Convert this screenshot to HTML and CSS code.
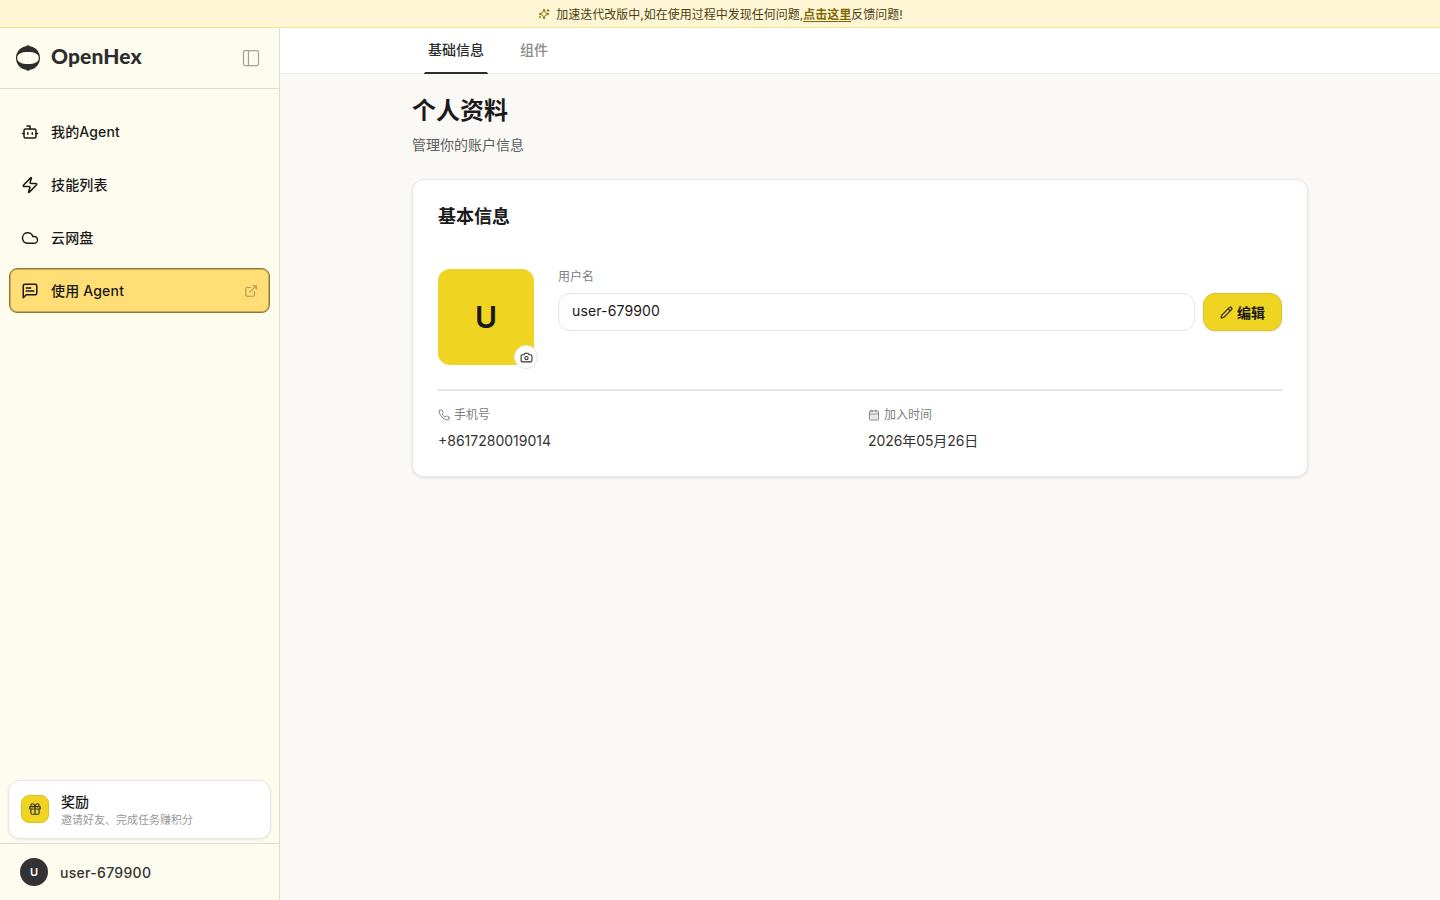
FILE: index.html
```html
<!DOCTYPE html>
<html lang="zh-CN">
<head>
  <meta charset="UTF-8">
  <title>OpenHex</title>
  <link rel="stylesheet" href="styles.css">
</head>
<body>
  <div class="banner">
    <svg class="icon banner-icon" viewBox="0 0 24 24"><path d="M9.937 15.5A2 2 0 0 0 8.5 14.063l-6.135-1.582a.5.5 0 0 1 0-.962L8.5 9.936A2 2 0 0 0 9.937 8.5l1.582-6.135a.5.5 0 0 1 .963 0L14.063 8.5A2 2 0 0 0 15.5 9.937l6.135 1.581a.5.5 0 0 1 0 .964L15.5 14.063a2 2 0 0 0-1.437 1.437l-1.582 6.135a.5.5 0 0 1-.963 0z"/><path d="M20 3v4M22 5h-4M4 17v2M5 18H3"/></svg>
    <span class="banner-text">加速迭代改版中,如在使用过程中发现任何问题,<a href="#">点击这里</a>反馈问题!</span>
  </div>

  <div class="layout">
    <aside class="sidebar">
      <div class="brand">
        <svg class="logo" viewBox="0 0 24 26"><path fill-rule="evenodd" d="M12 0L14 1.2C20 2.2 24 7 24 13S20 23.8 14 24.8L12 26L10 24.8C4 23.8 0 19 0 13S4 2.2 10 1.2ZM12 7C5.5 7 1.2 8.7 1.2 13S5.5 19 12 19S22.8 17.3 22.8 13S18.5 7 12 7Z"/></svg>
        <span class="brand-name">OpenHex</span>
        <svg class="icon toggle" viewBox="0 0 24 24"><rect x="3" y="3" width="18" height="18" rx="2"/><path d="M9 3v18"/></svg>
      </div>

      <nav class="nav">
        <a class="nav-item">
          <svg class="icon" viewBox="0 0 24 24"><path d="M12 8V4H8"/><rect x="4" y="8" width="16" height="12" rx="2"/><path d="M2 14h2M20 14h2M15 13v2M9 13v2"/></svg>
          <span>我的Agent</span>
        </a>
        <a class="nav-item">
          <svg class="icon" viewBox="0 0 24 24"><path d="M4 14a1 1 0 0 1-.78-1.63l9.9-10.2a.5.5 0 0 1 .86.46l-1.92 6.02A1 1 0 0 0 13 10h7a1 1 0 0 1 .78 1.63l-9.9 10.2a.5.5 0 0 1-.86-.46l1.92-6.02A1 1 0 0 0 11 14z"/></svg>
          <span>技能列表</span>
        </a>
        <a class="nav-item">
          <svg class="icon" viewBox="0 0 24 24"><path d="M17.5 19H9a7 7 0 1 1 6.71-9h1.79a4.5 4.5 0 1 1 0 9Z"/></svg>
          <span>云网盘</span>
        </a>
        <a class="nav-item active">
          <svg class="icon" viewBox="0 0 24 24"><path d="M21 15a2 2 0 0 1-2 2H7l-4 4V5a2 2 0 0 1 2-2h14a2 2 0 0 1 2 2zM13 8H7M17 12H7"/></svg>
          <span>使用 Agent</span>
          <svg class="icon external" viewBox="0 0 24 24"><path d="M15 3h6v6M10 14 21 3M18 13v6a2 2 0 0 1-2 2H5a2 2 0 0 1-2-2V8a2 2 0 0 1 2-2h6"/></svg>
        </a>
      </nav>

      <div class="reward">
        <div class="reward-icon">
          <svg class="icon" viewBox="0 0 24 24"><rect x="3" y="8" width="18" height="4" rx="1"/><path d="M12 8v13M19 12v7a2 2 0 0 1-2 2H7a2 2 0 0 1-2-2v-7M7.5 8a2.5 2.5 0 0 1 0-5A4.8 8 0 0 1 12 8a4.8 8 0 0 1 4.5-5 2.5 2.5 0 0 1 0 5"/></svg>
        </div>
        <div class="reward-text">
          <div class="reward-title">奖励</div>
          <div class="reward-desc">邀请好友、完成任务赚积分</div>
        </div>
      </div>

      <div class="user">
        <span class="user-avatar">U</span>
        <span class="user-name">user-679900</span>
      </div>
    </aside>

    <div class="page">
      <div class="tabs">
        <a class="tab current">基础信息</a>
        <a class="tab">组件</a>
      </div>

      <main class="content">
        <h1>个人资料</h1>
        <p class="subtitle">管理你的账户信息</p>

        <section class="card">
          <h2>基本信息</h2>
          <div class="profile">
            <div class="avatar">
              U
              <span class="camera">
                <svg class="icon" viewBox="0 0 24 24"><path d="M14.5 4h-5L7 7H4a2 2 0 0 0-2 2v9a2 2 0 0 0 2 2h16a2 2 0 0 0 2-2V9a2 2 0 0 0-2-2h-3l-2.5-3z"/><circle cx="12" cy="13" r="3"/></svg>
              </span>
            </div>
            <div class="field">
              <div class="label">用户名</div>
              <div class="field-row">
                <div class="input">user-679900</div>
                <button class="edit">
                  <svg class="icon" viewBox="0 0 24 24"><path d="M21.174 6.812a1 1 0 0 0-3.986-3.987L3.842 16.174a2 2 0 0 0-.5.83l-1.321 4.352a.5.5 0 0 0 .623.622l4.353-1.32a2 2 0 0 0 .83-.497zM15 5l4 4"/></svg>
                  编辑
                </button>
              </div>
            </div>
          </div>

          <div class="details">
            <div>
              <div class="label">
                <svg class="icon" viewBox="0 0 24 24"><path d="M22 16.92v3a2 2 0 0 1-2.18 2 19.79 19.79 0 0 1-8.63-3.07 19.5 19.5 0 0 1-6-6 19.79 19.79 0 0 1-3.07-8.67A2 2 0 0 1 4.11 2h3a2 2 0 0 1 2 1.72 12.84 12.84 0 0 0 .7 2.81 2 2 0 0 1-.45 2.11L8.09 9.91a16 16 0 0 0 6 6l1.27-1.27a2 2 0 0 1 2.11-.45 12.84 12.84 0 0 0 2.81.7A2 2 0 0 1 22 16.92z"/></svg>
                手机号
              </div>
              <div class="value">+8617280019014</div>
            </div>
            <div>
              <div class="label">
                <svg class="icon" viewBox="0 0 24 24"><path d="M8 2v4M16 2v4M3 10h18M8 14h.01M12 14h.01M16 14h.01M8 18h.01M12 18h.01M16 18h.01"/><rect x="3" y="4" width="18" height="18" rx="2"/></svg>
                加入时间
              </div>
              <div class="value date">2026年05月26日</div>
            </div>
          </div>
        </section>
      </main>
    </div>
  </div>
</body>
</html>
```

FILE: styles.css
```css
* {
  box-sizing: border-box;
}
body {
  margin: 0;
  height: 100vh;
  display: flex;
  flex-direction: column;
  font-family: Inter, "Noto Sans CJK SC", sans-serif;
  font-size: 14px;
  line-height: 20px;
  color: #1a1a1a;
  background-color: #faf9f6;
}
h1, h2, p {
  margin: 0;
}
.icon {
  width: 18px;
  height: 18px;
  flex-shrink: 0;
  fill: none;
  stroke: currentColor;
  stroke-width: 2;
  stroke-linecap: round;
  stroke-linejoin: round;
}
.banner {
  height: 28px;
  display: flex;
  align-items: center;
  justify-content: center;
  gap: 6px;
  padding-left: 1px;
  font-size: 12px;
  color: #4a3f10;
  background-color: #fff6d6;
  border-bottom: 1px solid #f5e68e;
}
.banner-icon {
  width: 12px;
  height: 12px;
  color: #8a6d00;
}
.banner-text {
  padding-top: 2px;
}
.banner a {
  color: #806600;
  font-weight: 600;
  text-underline-offset: 2px;
}
.layout {
  flex: 1;
  display: flex;
  min-height: 0;
}

/* サイドバー */
.sidebar {
  width: 280px;
  display: flex;
  flex-direction: column;
  background-color: #fefcef;
  border-right: 1px solid #deddd0;
}
.brand {
  height: 61px;
  display: flex;
  align-items: center;
  padding: 0 20px 0 16px;
  border-bottom: 1px solid #deddd0;
}
.logo {
  width: 24px;
  height: 26px;
  fill: #2d2d2d;
}
.brand-name {
  margin-left: 11px;
  padding-bottom: 4px;
  font-family: Lato, sans-serif;
  font-size: 21px;
  font-weight: 900;
  letter-spacing: 0.1px;
  color: #2d2d2d;
}
.toggle {
  width: 20px;
  height: 20px;
  margin-left: auto;
  margin-right: -2px;
  stroke-width: 1.5;
  color: #a3a198;
}
.nav {
  flex: 1;
  display: flex;
  flex-direction: column;
  gap: 8px;
  padding: 20px 9px;
}
.nav-item {
  height: 45px;
  display: flex;
  align-items: center;
  gap: 12px;
  padding: 0 12px;
  font-weight: 500;
  letter-spacing: 0.14px;
  border-radius: 8px;
}
.nav-item.active {
  padding: 0 11px;
  letter-spacing: 0.18px;
  background-color: #ffdf75;
  border: 1px solid #8f7a35;
  box-shadow: inset 0 0 0 1px rgba(143, 122, 53, 0.5);
}
.external {
  width: 14px;
  height: 14px;
  margin-left: auto;
  color: #b39c52;
}
.reward {
  height: 59px;
  display: flex;
  align-items: center;
  gap: 12px;
  margin: 0 8px 4px;
  padding: 0 12px 1px;
  background-color: #fff;
  border: 1px solid #e5e5e5;
  border-radius: 12px;
  box-shadow: 0 1px 3px rgba(0, 0, 0, 0.08);
}
.reward-icon {
  width: 28px;
  height: 28px;
  display: flex;
  align-items: center;
  justify-content: center;
  color: #333;
  background-color: #f0d422;
  border: 1px solid #dcc220;
  border-radius: 8px;
}
.reward-icon .icon {
  width: 14px;
  height: 14px;
}
.reward-text {
  padding-top: 2px;
}
.reward-title {
  font-weight: 500;
}
.reward-desc {
  font-size: 11px;
  line-height: 16px;
  color: #999;
}
.user {
  height: 57px;
  display: flex;
  align-items: center;
  gap: 12px;
  padding: 0 20px;
  border-top: 1px solid #deddd0;
}
.user-avatar {
  width: 28px;
  height: 28px;
  font-size: 11px;
  line-height: 28px;
  font-weight: 600;
  text-align: center;
  color: #fff;
  background-color: #333;
  border-radius: 50%;
}
.user-name {
  padding-top: 2px;
  font-weight: 500;
  letter-spacing: 0.3px;
  color: #333;
}

/* メイン */
.page {
  flex: 1;
}
.tabs {
  height: 46px;
  display: flex;
  gap: 4px;
  padding-left: 132px;
  background-color: #fff;
  border-bottom: 1px solid #ebebeb;
}
.tab {
  height: 46px;
  padding: 0 16px;
  line-height: 44px;
  font-weight: 500;
  color: #8c8c8c;
  position: relative;
}
.tab.current {
  color: #2d2d2d;
}
.tab.current::after {
  content: "";
  position: absolute;
  left: 12px;
  right: 12px;
  bottom: 0;
  height: 2px;
  background-color: #2d2d2d;
  border-radius: 2px 2px 0 0;
}
.content {
  width: 896px;
  margin: 0 auto;
  padding-top: 21px;
}
h1 {
  font-size: 24px;
  line-height: 32px;
  font-weight: 700;
}
.subtitle {
  margin-top: 8px;
  color: #5c5c5c;
}
.card {
  height: 298px;
  margin-top: 24px;
  padding: 25px 25px 24px;
  background-color: #fff;
  border: 1px solid #e8e8e8;
  border-radius: 12px;
  box-shadow: 0 1px 3px rgba(0, 0, 0, 0.1);
}
h2 {
  font-size: 18px;
  line-height: 24px;
  font-weight: 600;
}
.profile {
  display: flex;
  gap: 24px;
  margin-top: 40px;
  padding-bottom: 24px;
  border-bottom: 2px solid #e5e5e5;
}
.avatar {
  width: 96px;
  height: 96px;
  font-size: 30px;
  line-height: 96px;
  font-weight: 600;
  text-align: center;
  background-color: #f0d422;
  border-radius: 12px;
  position: relative;
}
.camera {
  position: absolute;
  right: -4px;
  bottom: -4px;
  width: 24px;
  height: 24px;
  display: flex;
  align-items: center;
  justify-content: center;
  color: #333;
  background-color: #fff;
  border: 1px solid #e5e5e5;
  border-radius: 50%;
}
.camera .icon {
  width: 13px;
  height: 13px;
}
.field {
  flex: 1;
}
.label {
  display: flex;
  align-items: center;
  gap: 4px;
  font-size: 12px;
  line-height: 16px;
  color: #808080;
}
.label .icon {
  width: 12px;
  height: 12px;
}
.field-row {
  display: flex;
  gap: 8px;
  margin-top: 8px;
}
.input {
  flex: 1;
  height: 38px;
  padding: 0 13px;
  line-height: 34px;
  letter-spacing: 0.14px;
  border: 1px solid #e5e5e5;
  border-radius: 12px;
}
.edit {
  width: 79px;
  height: 38px;
  display: flex;
  align-items: center;
  justify-content: center;
  gap: 4px;
  padding: 1px 0 0;
  font: inherit;
  font-weight: 600;
  color: #1a1a1a;
  background-color: #f0d422;
  border: 1px solid #dcc220;
  border-radius: 12px;
  box-shadow: 0 1px 2px rgba(0, 0, 0, 0.08);
}
.edit .icon {
  width: 13px;
  height: 13px;
}
.details {
  display: grid;
  grid-template-columns: 1fr 1fr;
  gap: 16px;
  margin-top: 16px;
}
.value {
  margin-top: 8px;
  color: #333;
}
.value.date {
  letter-spacing: -0.08px;
}
```
